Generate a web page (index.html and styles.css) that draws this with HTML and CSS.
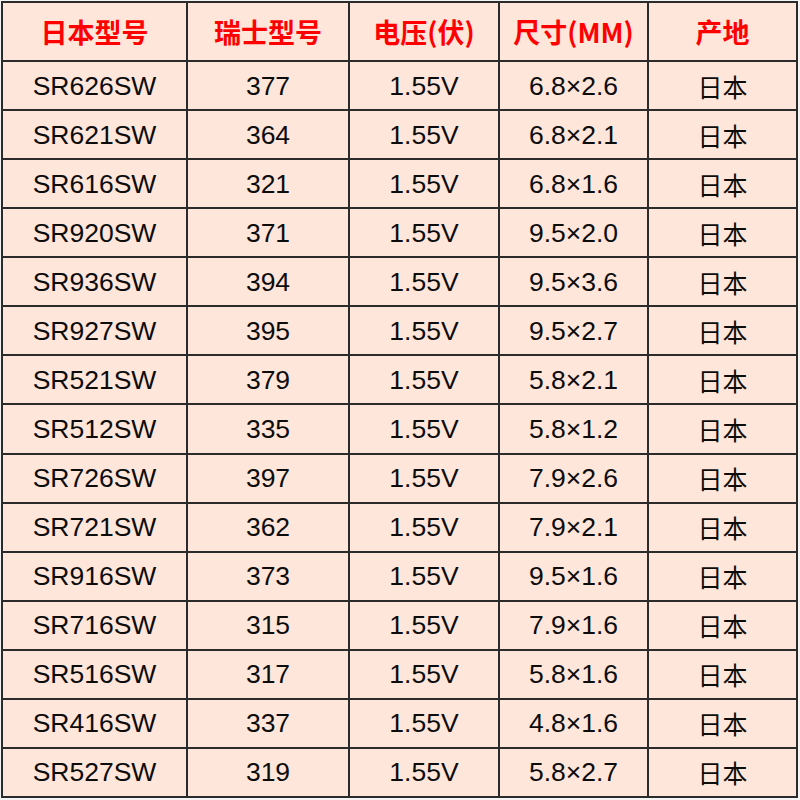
FILE: index.html
```html
<!DOCTYPE html>
<html>
<head>
<meta charset="utf-8">
<link rel="stylesheet" href="styles.css">
</head>
<body>
<div class="sheet">
  <div class="cell head">日本型号</div>
  <div class="cell head">瑞士型号</div>
  <div class="cell head">电压(伏)</div>
  <div class="cell head">尺寸(MM)</div>
  <div class="cell head">产地</div>

  <div class="cell">SR626SW</div><div class="cell">377</div><div class="cell">1.55V</div><div class="cell">6.8×2.6</div><div class="cell cjk">日本</div>
  <div class="cell">SR621SW</div><div class="cell">364</div><div class="cell">1.55V</div><div class="cell">6.8×2.1</div><div class="cell cjk">日本</div>
  <div class="cell">SR616SW</div><div class="cell">321</div><div class="cell">1.55V</div><div class="cell">6.8×1.6</div><div class="cell cjk">日本</div>
  <div class="cell">SR920SW</div><div class="cell">371</div><div class="cell">1.55V</div><div class="cell">9.5×2.0</div><div class="cell cjk">日本</div>
  <div class="cell">SR936SW</div><div class="cell">394</div><div class="cell">1.55V</div><div class="cell">9.5×3.6</div><div class="cell cjk">日本</div>
  <div class="cell">SR927SW</div><div class="cell">395</div><div class="cell">1.55V</div><div class="cell">9.5×2.7</div><div class="cell cjk">日本</div>
  <div class="cell">SR521SW</div><div class="cell">379</div><div class="cell">1.55V</div><div class="cell">5.8×2.1</div><div class="cell cjk">日本</div>
  <div class="cell">SR512SW</div><div class="cell">335</div><div class="cell">1.55V</div><div class="cell">5.8×1.2</div><div class="cell cjk">日本</div>
  <div class="cell">SR726SW</div><div class="cell">397</div><div class="cell">1.55V</div><div class="cell">7.9×2.6</div><div class="cell cjk">日本</div>
  <div class="cell">SR721SW</div><div class="cell">362</div><div class="cell">1.55V</div><div class="cell">7.9×2.1</div><div class="cell cjk">日本</div>
  <div class="cell">SR916SW</div><div class="cell">373</div><div class="cell">1.55V</div><div class="cell">9.5×1.6</div><div class="cell cjk">日本</div>
  <div class="cell">SR716SW</div><div class="cell">315</div><div class="cell">1.55V</div><div class="cell">7.9×1.6</div><div class="cell cjk">日本</div>
  <div class="cell">SR516SW</div><div class="cell">317</div><div class="cell">1.55V</div><div class="cell">5.8×1.6</div><div class="cell cjk">日本</div>
  <div class="cell">SR416SW</div><div class="cell">337</div><div class="cell">1.55V</div><div class="cell">4.8×1.6</div><div class="cell cjk">日本</div>
  <div class="cell">SR527SW</div><div class="cell">319</div><div class="cell">1.55V</div><div class="cell">5.8×2.7</div><div class="cell cjk">日本</div>
</div>
</body>
</html>
```
FILE: styles.css
```css
html, body {
  margin: 0;
  padding: 0;
  background: #f4f4f4;
}
.sheet {
  margin: 1px 0 0 1px;
  width: 797px;
  height: 797px;
  box-sizing: border-box;
  padding: 2px;
  gap: 2px;
  background: #2b2b2b;
  display: grid;
  grid-template-columns: 183px 160px 148px 147px 147px;
  grid-template-rows: 57px repeat(15, 1fr);
}
.cell {
  background: #fee6da;
  display: flex;
  align-items: center;
  justify-content: center;
  font-family: "Liberation Sans", "Noto Sans CJK SC", Arial, sans-serif;
  font-size: 26.5px;
  color: #0c0c0c;
  padding-top: 1px;
}
.cjk {
  font-family: "Noto Sans CJK SC", sans-serif;
  font-size: 25px;
  padding-top: 0;
}
.head {
  font-family: "Noto Sans CJK SC", "Liberation Sans", sans-serif;
  font-weight: bold;
  color: #ff0000;
  font-size: 27px;
  padding-top: 0;
}
```
